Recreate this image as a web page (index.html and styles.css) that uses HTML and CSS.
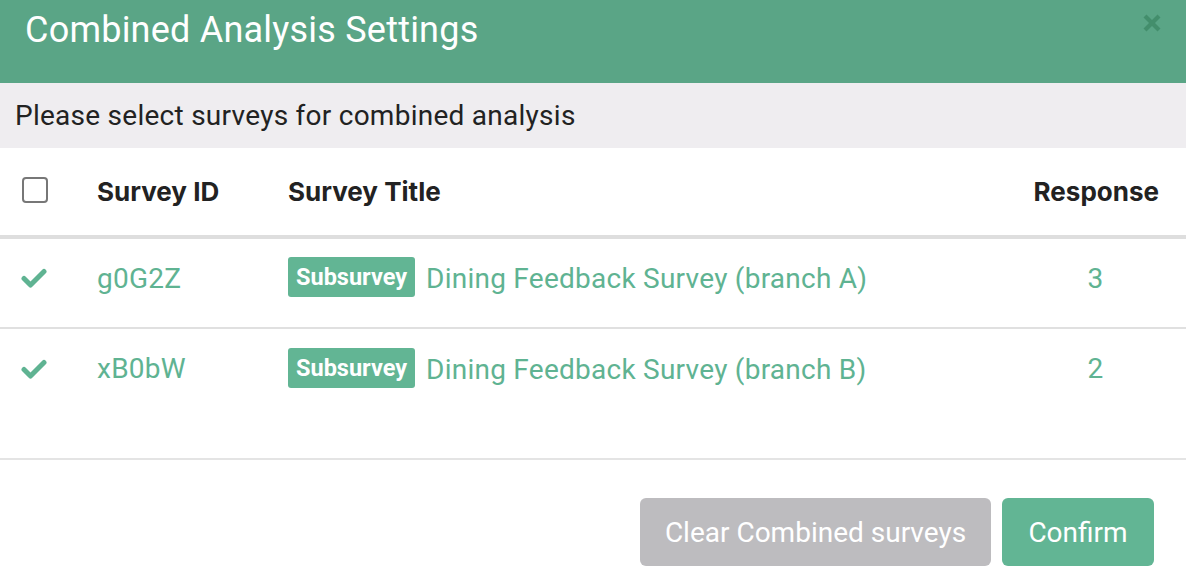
FILE: index.html
```html
<!DOCTYPE html>
<html>
<head>
<meta charset="utf-8">
<link rel="stylesheet" href="styles.css">
</head>
<body>
<div class="modal">
  <div class="modal-header">
    <h1 class="modal-title">Combined Analysis Settings</h1>
    <button class="close" aria-label="Close">
      <svg width="20" height="20" viewBox="0 0 20 20"><path d="M3 3 L17 17 M17 3 L3 17" stroke="currentColor" stroke-width="4.2" stroke-linecap="butt"/></svg>
    </button>
  </div>
  <div class="subtitle">Please select surveys for combined analysis</div>
  <table class="table">
    <thead>
      <tr>
        <th class="c-check"><span class="checkbox"></span></th>
        <th class="c-id">Survey ID</th>
        <th class="c-title">Survey Title</th>
        <th class="c-resp">Response</th>
      </tr>
    </thead>
    <tbody>
      <tr>
        <td class="c-check"><svg class="tick" width="26" height="20" viewBox="0 0 26 20"><path d="M3 10.5 L9.5 17 L23 3.5" fill="none" stroke="currentColor" stroke-width="5" stroke-linecap="round" stroke-linejoin="round"/></svg></td>
        <td class="c-id link">g0G2Z</td>
        <td class="c-title"><span class="badge">Subsurvey</span><span class="link">Dining Feedback Survey (branch A)</span></td>
        <td class="c-resp link">3</td>
      </tr>
      <tr>
        <td class="c-check"><svg class="tick" width="26" height="20" viewBox="0 0 26 20"><path d="M3 10.5 L9.5 17 L23 3.5" fill="none" stroke="currentColor" stroke-width="5" stroke-linecap="round" stroke-linejoin="round"/></svg></td>
        <td class="c-id link">xB0bW</td>
        <td class="c-title"><span class="badge">Subsurvey</span><span class="link">Dining Feedback Survey (branch B)</span></td>
        <td class="c-resp link">2</td>
      </tr>
    </tbody>
  </table>
  <div class="spacer"></div>
  <div class="footer">
    <button class="btn btn-gray">Clear Combined surveys</button>
    <button class="btn btn-green">Confirm</button>
  </div>
</div>
</body>
</html>
```
FILE: styles.css
```css
* { box-sizing: border-box; }
html, body { margin: 0; padding: 0; background: #fff; }
body { font-family: Roboto, "Noto Sans", sans-serif; width: 1186px; height: 572px; overflow: hidden; }
.modal { display: flex; flex-direction: column; width: 1186px; }
.modal-header {
  height: 83px; background: #5aa586; display: flex; align-items: flex-start;
  justify-content: space-between; padding: 0 24px 0 25px;
}
.modal-title { margin: 8px 0 0; font-weight: 400; font-size: 36px; line-height: 44px; color: #fff; letter-spacing: 0.22px; }
.close { border: 0; background: none; padding: 0; margin-top: 13px; color: #3f8a68; opacity: 0.85; display: flex; }
.subtitle {
  height: 65px; background: #efedf0; color: #222; font-size: 28px;
  padding: 0 15px; display: flex; align-items: center; padding-bottom: 0; letter-spacing: 0.26px;
}
.table { width: 100%; border-collapse: collapse; }
thead tr { height: 89px; border-bottom: 4px solid #dedede; }
th { font-family: Inter, Roboto, sans-serif; font-weight: 700; font-size: 26px; color: #222; text-align: left; padding: 0; padding-bottom: 0; }
tbody tr { height: 91px; border-bottom: 2px solid #e0e0e0; }
tbody tr:last-child { border-bottom: 0; height: 90px; }
td { padding: 0; padding-bottom: 10px; font-size: 28px; vertical-align: middle; }
.c-check { width: 97px; padding-left: 22px; }
.c-id { width: 191px; }
.c-resp { text-align: center; width: 159px; padding-right: 22px; }
th.c-resp { text-align: right; padding-right: 27px; }
.checkbox { display: block; width: 26px; height: 26px; border: 2px solid #777; border-radius: 4px; margin-bottom: 4px; }
.tick { display: block; color: #5fb392; margin-left: -1px; }
.link { color: #5fb392; letter-spacing: 0.25px; }
.badge {
  display: inline-block; background: #62b594; color: #fff; font-weight: 700; font-size: 23.5px;
  height: 40px; line-height: 40px; padding: 0 8px; border-radius: 3px; margin-right: 11px; vertical-align: middle; letter-spacing: 0;
  position: relative; top: -1px;
}
.c-title .link { vertical-align: middle; }
.spacer { height: 42px; border-bottom: 2px solid #e4e4e4; }
.footer { display: flex; justify-content: flex-end; gap: 11px; padding: 38px 32px 0 0; }
.btn {
  border: 0; height: 68px; border-radius: 6px; color: #fff; font-family: Roboto, sans-serif;
  font-size: 28px; padding: 0; letter-spacing: 0;
}
.btn-gray { background: #bdbcbf; width: 351px; }
.btn-green { background: #62b594; width: 152px; }
```
